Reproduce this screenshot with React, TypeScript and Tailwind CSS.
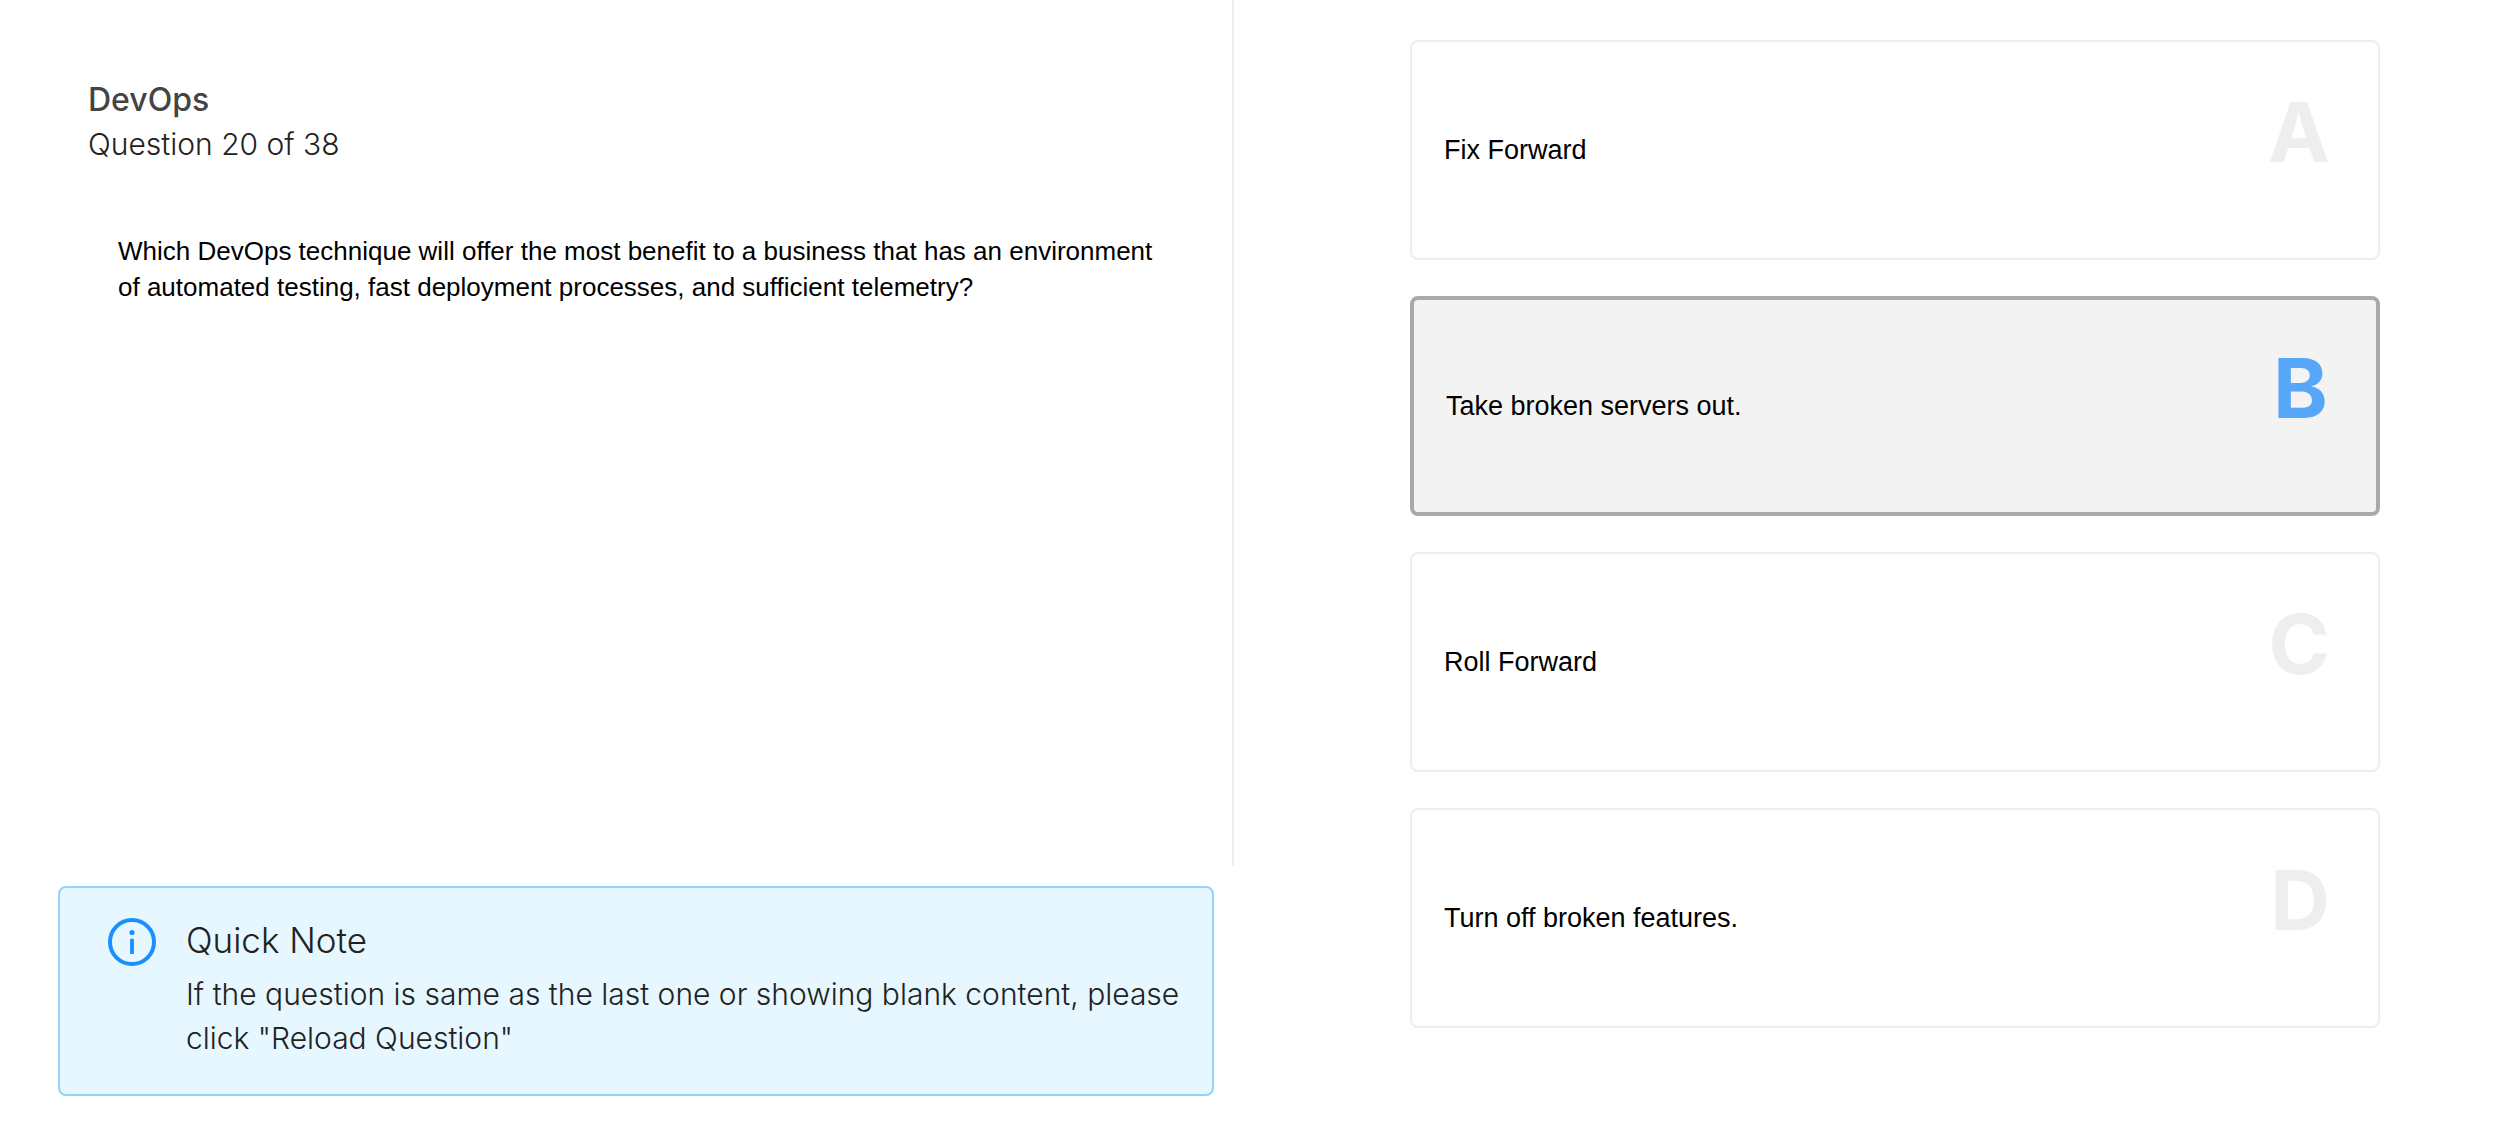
import { useState } from 'react';

const options = [
  { letter: 'A', text: 'Fix Forward' },
  { letter: 'B', text: 'Take broken servers out.' },
  { letter: 'C', text: 'Roll Forward' },
  { letter: 'D', text: 'Turn off broken features.' },
];

function InfoIcon() {
  return (
    <svg viewBox="0 0 48 48" className="h-12 w-12 shrink-0 text-[#1890ff]" fill="none" aria-hidden="true">
      <circle cx="24" cy="24" r="22" stroke="currentColor" strokeWidth="4" />
      <circle cx="24" cy="14.5" r="2.6" fill="currentColor" />
      <rect x="22.1" y="20.8" width="3.8" height="15.2" rx="0.4" fill="currentColor" />
    </svg>
  );
}

function QuickNote() {
  return (
    <aside className="mt-5 mr-5 mb-[46px] ml-[58px] flex items-start gap-[30px] rounded-lg border-2 border-[#91d5ff] bg-[#e6f7ff] pt-[30px] pr-8 pb-[34px] pl-12 text-[#222222]">
      <InfoIcon />
      <div className="min-w-0 flex-1">
        <h2 className="text-[35px] leading-[44px]">Quick Note</h2>
        <p className="mt-[10px] text-[30px] leading-[44px]">
          If the question is same as the last one or showing blank content, please click "Reload Question"
        </p>
      </div>
    </aside>
  );
}

type OptionProps = { letter: string; text: string; selected: boolean; onSelect: () => void };

function OptionCard({ letter, text, selected, onSelect }: OptionProps) {
  return (
    <button
      type="button"
      aria-pressed={selected}
      onClick={onSelect}
      className={
        'flex min-h-[220px] w-full cursor-pointer items-center justify-between rounded-lg pr-12 pl-8 text-left ' +
        (selected ? 'border-4 border-[#a9a9a9] bg-[#f3f3f3]' : 'border-2 border-[#eeeeee] bg-white')
      }
    >
      <span className="font-['Liberation_Sans',sans-serif] text-[27px] leading-9 text-black">{text}</span>
      <span
        className={'pb-9 text-[83px] leading-[84px] font-bold ' + (selected ? 'text-[#57a7f8]' : 'text-[#eeeeee]')}
      >
        {letter}
      </span>
    </button>
  );
}

export default function App() {
  const [selected, setSelected] = useState('B');
  return (
    <main className="flex min-h-screen bg-white font-['Inter',sans-serif] font-light">
      <div className="flex w-[49.16%] shrink-0 flex-col">
        <section className="flex-1 border-r-2 border-[#eeeeee] pt-[78px] pr-16 pl-[88px]">
          <h1 className="text-[32px] leading-[44px] font-medium text-[#444444]">DevOps</h1>
          <p className="text-[30px] leading-[44px] text-[#222222]">Question 20 of 38</p>
          <p className="mt-[67px] pl-[30px] font-['Liberation_Sans',sans-serif] text-[26px] leading-9 font-normal text-black">
            Which DevOps technique will offer the most benefit to a business that has an environment of automated
            testing, fast deployment processes, and sufficient telemetry?
          </p>
        </section>
        <QuickNote />
      </div>
      <section aria-label="Answers" className="flex min-w-0 flex-1 flex-col gap-9 pt-10 pr-[130px] pb-10 pl-[176px]">
        {options.map((o) => (
          <OptionCard key={o.letter} {...o} selected={o.letter === selected} onSelect={() => setSelected(o.letter)} />
        ))}
      </section>
    </main>
  );
}
